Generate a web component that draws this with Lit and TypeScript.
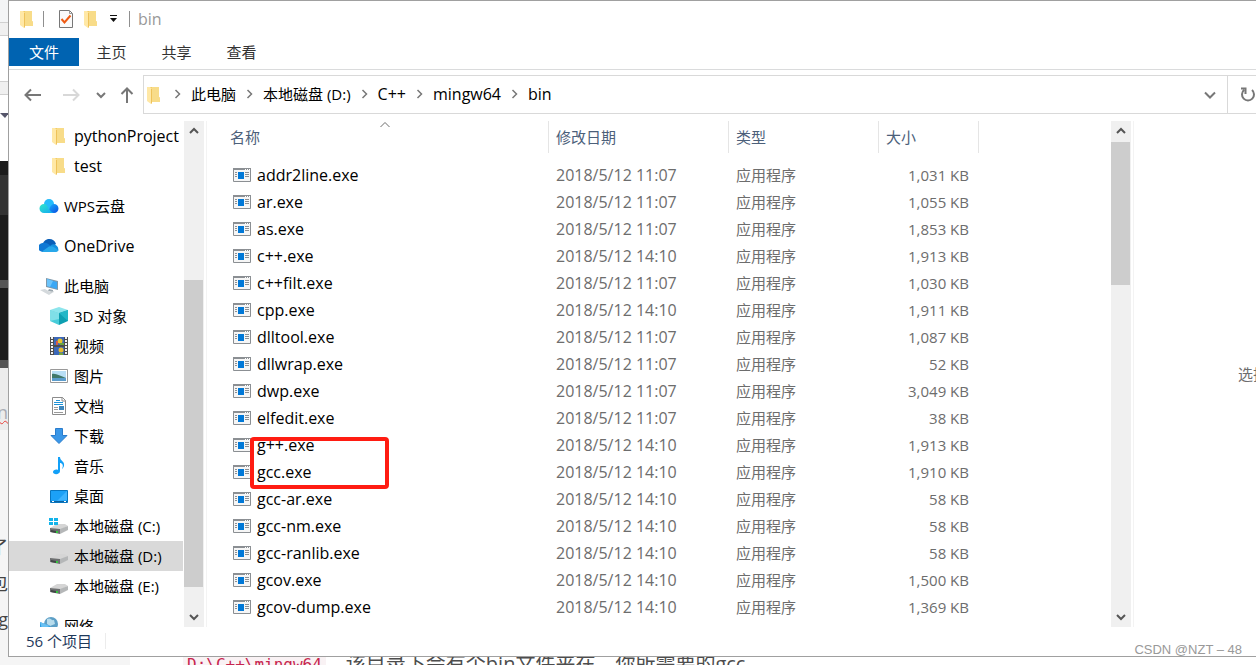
import { LitElement, html, css, svg } from "lit";
import { customElement, property } from "lit/decorators.js";
import { classMap } from "lit/directives/class-map.js";
import { styleMap } from "lit/directives/style-map.js";

const base = css`
  * { box-sizing: border-box; }
  button {
    margin: 0; padding: 0; border: 0; background: none;
    font: inherit; color: inherit; cursor: default;
    display: flex; align-items: center; justify-content: center;
  }
  a { color: inherit; text-decoration: none; }
  svg { display: block; flex: none; }
  .latin { font-size: 16px; }
`;

// Latin letters run smaller than ideographs at one size, so Latin-only labels are set a step larger.
const isLatin = (text: string) => /^[\x20-\x7e]+$/.test(text);

const folder = html`<svg width="20" height="20" viewBox="0 0 20 20">
  <path d="M6 2h9v10l1 1v4H6z" fill="#f3cd68"/>
  <path d="M8 2h7v10l1 1v4H8z" fill="#f8dc89"/>
  <path d="M3 2h3l2 2v14l-1 1-4-3z" fill="#ffe8a6"/>
  <path d="M7 4l1 0v14l-1 1z" fill="#eec25a"/></svg>`;

const drive = svg`
  <path d="M1 12l7-4h8l3 2-8 4z" fill="#d5d5d5"/>
  <path d="M1 12l10 1v5L1 16z" fill="#6d6f70"/>
  <path d="M11 13l8-3v4l-8 4z" fill="#b5b7b8"/>
  <path d="M2 14l5 1v2l-5-1z" fill="#424546"/>
  <path d="M7 15h2v2H7z" fill="#35c63c"/>`;

const icons: Record<string, unknown> = {
  folder,
  wps: html`<svg width="20" height="20" viewBox="0 0 20 20">
    <defs><linearGradient id="w1" x1="0" y1="0" x2="1" y2="1"><stop offset="0" stop-color="#1bb3ff"/><stop offset="1" stop-color="#0b4fe0"/></linearGradient>
    <linearGradient id="w2" x1="0" y1="0" x2="1" y2="1"><stop offset="0" stop-color="#2fe6c8"/><stop offset="1" stop-color="#12a6f5"/></linearGradient></defs>
    <circle cx="10" cy="8" r="5" fill="#25bbfb"/><path d="M8 17c2-2 3-9 7-9a4.500 4.500 0 0 1 0 9z" fill="url(#w1)"/>
    <path d="M5 17a4.500 4.500 0 0 1 0-9c4 0 5 8 10 9z" fill="url(#w2)"/></svg>`,
  onedrive: html`<svg width="20" height="20" viewBox="0 0 20 20">
    <path d="M4 8c1-6 11-7 13 0l-6 4z" fill="#0a5fb8"/><path d="M4 16a4.500 4.500 0 0 1-.5-9c4-1 6 1 8 3l-7 6z" fill="#0f78d4"/>
    <path d="M13 8.500a5 5 0 0 1 6 6.500l-8-5z" fill="#1490df"/><path d="M3 15.500l7-5c3-1 6 1 9.500 4-1 1.500-2 1.500-3 1.500H4z" fill="#28a8ea"/></svg>`,
  pc: html`<svg width="20" height="20" viewBox="0 0 20 20">
    <path d="M7 2l12 3v9L7 11z" fill="#7f98aa"/><path d="M8 3l10 3v7L8 10z" fill="#3ba8f5"/><path d="M8 3l6 2-3 6-3-1z" fill="#6cc4fb"/>
    <path d="M10 13l4 1v2l-5-1z" fill="#9aa6ad"/><path d="M1 14l5-1 7 4-3 2z" fill="#d4d9dc"/><path d="M11 16l3-1 1 1-3 1z" fill="#c3cacd"/></svg>`,
  cube: html`<svg width="20" height="20" viewBox="0 0 20 20">
    <path d="M10 1l9 3-9 3-9-3z" fill="#8de5ec"/><path d="M1 4l9 3v12l-9-4z" fill="#47ccd9"/><path d="M19 4l-9 3v12l9-4z" fill="#0d9fb1"/>
    <path d="M1 4l9 3v6L1 15z" fill="#7fdfe7"/><path d="M10 7l9-3v11z" fill="#22b7c7"/></svg>`,
  video: html`<svg width="20" height="20" viewBox="0 0 20 20">
    <path d="M1 1h18v18H1z" fill="#4d4d4d"/><path d="M5 1h10v8H5zM5 11h10v8H5z" fill="#3c68b8"/>
    <path d="M3 1v18M17 1v18" stroke="#f2f2f2" stroke-width="2" stroke-dasharray="2 1"/>
    <circle cx="11" cy="5" r="2.500" fill="#e8c22c"/><path d="M7 5h2v4H7z" fill="#d45b4c"/><path d="M11 7h4v2h-4z" fill="#69a440"/>
    <circle cx="12" cy="14" r="2.500" fill="#e6b92e"/><path d="M10 17h4v2h-4z" fill="#75a43e"/></svg>`,
  picture: html`<svg width="20" height="20" viewBox="0 0 20 20">
    <path d="M1.500 3.500h17v13h-17z" fill="#fff" stroke="#999"/><path d="M3 5h14v10H3z" fill="#b8def5"/>
    <path d="M3 8c4-1 8 2 14 4v1H3z" fill="#41786a"/><path d="M3 12h14v3H3z" fill="#5b9ccc"/></svg>`,
  doc: html`<svg width="20" height="20" viewBox="0 0 20 20">
    <path d="M3.500 1.500h10l3 3v14h-13z" fill="#fff" stroke="#8c8c8c"/><path d="M13 1v4h4" fill="none" stroke="#8c8c8c"/>
    <path d="M7 4.500h4M5 6.500h9M5 8.500h9" stroke="#1f93d8"/><path d="M5 11.500h4M5 13.500h4M5 16.500h9" stroke="#9a9a9a"/><path d="M10 10h5v4h-5z" fill="#3c86bd"/></svg>`,
  download: html`<svg width="20" height="20" viewBox="0 0 20 20"><path d="M6.500 2.500h7v7h4.500l-8 8-8-8h4.500z" fill="#3a97e8" stroke="#2a7ccc"/></svg>`,
  music: html`<svg width="20" height="20" viewBox="0 0 20 20">
    <path d="M9 1h2c0 4 5 4 4 9-1 2-1 2-2 3 2-4 0-6-2-6v8c0 4-7 4-7 1 0-2 3-3 5-2z" fill="#12a0f8"/></svg>`,
  desktop: html`<svg width="20" height="20" viewBox="0 0 20 20">
    <path d="M1.500 4.500h17v12h-17z" fill="#1ca1f7" stroke="#0876c0"/><path d="M18 5v9L8 15z" fill="#3eb4ff"/>
    <path d="M2 15.500h16" stroke="#0c609c"/><path d="M3 15.500h2M15 15.500h2" stroke="#fff"/></svg>`,
  system: html`<svg width="20" height="20" viewBox="0 0 20 20">${drive}<path d="M0 2h4v3H0zM5 2h4v3H5zM0 6h4v3H0zM5 6h4v3H5z" fill="#12b3ea"/></svg>`,
  drive: html`<svg width="20" height="20" viewBox="0 0 20 20">${drive}</svg>`,
  network: html`<svg width="20" height="20" viewBox="0 0 20 20">
    <circle cx="12" cy="8" r="7" fill="#5d9fc6"/><path d="M8 3c4-2 4 2 7 1l1 4-5 2-3-2z" fill="#b8dcec"/>
    <path d="M1 6l10 4v9L1 15z" fill="#2b9ce2"/><path d="M1 6l10 4-8 3z" fill="#69c1f3"/></svg>`,
};

const chevron = (d: string) => html`<svg width="12" height="12" viewBox="0 0 12 12"><path d=${d} fill="none" stroke="currentColor" stroke-width="2"/></svg>`;
const UP = "M2 8l4-4 4 4";
const DOWN = "M2 4l4 4 4-4";

@customElement("scroll-bar")
class ScrollBar extends LitElement {
  @property({ type: Number }) before = 0;
  @property({ type: Number }) thumb = 1;
  @property({ type: Number }) after = 0;
  static styles = [base, css`
    :host { display: flex; flex-direction: column; flex: none; width: 23px; padding-right: 2px; border-right: 1px solid #f3f3f3; }
    .track { flex: 1; display: flex; flex-direction: column; width: 20px; background: #f0f0f0; color: #555; }
    button { height: 20px; width: 20px; flex: none; }
    .rail { flex: 1; display: flex; flex-direction: column; }
    .thumb { width: 19px; background: #cdcdcd; }
  `];
  render() {
    return html`<div class="track">
      <button aria-label="向上滚动">${chevron(UP)}</button>
      <div class="rail">
        <div style=${styleMap({ flexGrow: String(this.before) })}></div>
        <div class="thumb" style=${styleMap({ flexGrow: String(this.thumb) })}></div>
        <div style=${styleMap({ flexGrow: String(this.after) })}></div>
      </div>
      <button aria-label="向下滚动">${chevron(DOWN)}</button>
    </div>`;
  }
}

interface Node { icon: string; label: string; nested?: boolean; selected?: boolean; }
const groups: Node[][] = [
  [{ icon: "folder", label: "pythonProject", nested: true }, { icon: "folder", label: "test", nested: true }],
  [{ icon: "wps", label: "WPS云盘" }],
  [{ icon: "onedrive", label: "OneDrive" }],
  [
    { icon: "pc", label: "此电脑" },
    { icon: "cube", label: "3D 对象", nested: true },
    { icon: "video", label: "视频", nested: true },
    { icon: "picture", label: "图片", nested: true },
    { icon: "doc", label: "文档", nested: true },
    { icon: "download", label: "下载", nested: true },
    { icon: "music", label: "音乐", nested: true },
    { icon: "desktop", label: "桌面", nested: true },
    { icon: "system", label: "本地磁盘 (C:)", nested: true },
    { icon: "drive", label: "本地磁盘 (D:)", nested: true, selected: true },
    { icon: "drive", label: "本地磁盘 (E:)", nested: true },
  ],
  [{ icon: "network", label: "网络" }],
];

@customElement("nav-tree")
class NavTree extends LitElement {
  static styles = [base, css`
    :host { display: block; flex: none; width: 175px; overflow: hidden; }
    .tree { display: flex; flex-direction: column; gap: 10px; width: 174px; }
    .item { display: flex; align-items: center; gap: 5px; height: 30px; padding-left: 30px; white-space: nowrap; color: #000; }
    .nested { padding-left: 40px; }
    .selected { background: #d9d9d9; }
  `];
  render() {
    return html`<nav class="tree">${groups.map((g) => html`<div>${g.map((n) => html`
      <a href="#" class=${classMap({ item: true, nested: !!n.nested, selected: !!n.selected })}>${icons[n.icon]}<span class=${classMap({ latin: isLatin(n.label) })}>${n.label}</span></a>`)}</div>`)}</nav>`;
  }
}

const files: [string, string, string][] = [
  ["addr2line.exe", "11:07", "1,031"], ["ar.exe", "11:07", "1,055"], ["as.exe", "11:07", "1,853"],
  ["c++.exe", "14:10", "1,913"], ["c++filt.exe", "11:07", "1,030"], ["cpp.exe", "14:10", "1,911"],
  ["dlltool.exe", "11:07", "1,087"], ["dllwrap.exe", "11:07", "52"], ["dwp.exe", "11:07", "3,049"],
  ["elfedit.exe", "11:07", "38"], ["g++.exe", "14:10", "1,913"], ["gcc.exe", "14:10", "1,910"],
  ["gcc-ar.exe", "14:10", "58"], ["gcc-nm.exe", "14:10", "58"], ["gcc-ranlib.exe", "14:10", "58"],
  ["gcov.exe", "14:10", "1,500"], ["gcov-dump.exe", "14:10", "1,369"], ["gcov-tool.exe", "14:10", "1,401"],
];

const exeIcon = html`<svg width="18" height="14" viewBox="0 0 18 14">
  <path d="M.5 .5h17v13H.5z" fill="#f6f6f6" stroke="#8b8f93"/><path d="M0 0h18v2H0z" fill="#8b8f93"/>
  <path d="M12 1h1v1h-1zM14 1h1v1h-1zM16 1h1v1h-1z" fill="#fff"/><path d="M5 4h6v7H5z" fill="#0078d7"/>
  <path d="M2 4.500h2M2 6.500h2M2 8.500h2M12 4.500h4M12 6.500h4M12 8.500h4" stroke="#8b8f93"/></svg>`;

@customElement("file-list")
class FileList extends LitElement {
  static styles = [base, css`
    :host { display: block; flex: 1; min-width: 0; overflow: hidden; padding-left: 15px; }
    table { border-collapse: separate; border-spacing: 0; table-layout: fixed; width: 757px; }
    .c-name { width: 327px; } .c-date { width: 180px; } .c-type { width: 150px; } .c-size { width: 100px; }
    th { position: relative; height: 32px; padding: 0 0 1px 8px; border-right: 1px solid #e5e5e5; font-weight: 400; text-align: left; color: #4c607a; }
    th + th { padding-left: 7px; }
    .sort { position: absolute; top: 0; left: 50%; margin-left: -6px; }
    tbody::before { content: ""; display: block; height: 8px; }
    td { height: 27px; padding: 0 0 0 7px; color: #6d6d6d; white-space: nowrap; }
    .name { position: relative; padding-left: 11px; color: #000; }
    .file { display: flex; align-items: center; gap: 6px; }
    .size { padding-right: 10px; text-align: right; }
    .mark { position: absolute; top: 6px; left: 28px; width: 139px; height: 52px; border: 4px solid #ff1c12; border-radius: 4px; z-index: 1; }
  `];
  render() {
    return html`<table>
      <colgroup><col class="c-name"><col class="c-date"><col class="c-type"><col class="c-size"></colgroup>
      <thead><tr>
        <th><button>名称</button><svg class="sort" width="12" height="8" viewBox="0 0 12 8"><path d="M1.500 6L6 1.500 10.500 6" fill="none" stroke="#6d6d6d"/></svg></th>
        <th><button>修改日期</button></th><th><button>类型</button></th><th><button>大小</button></th>
      </tr></thead>
      <tbody>${files.map(([name, time, size]) => html`<tr>
        <td class="name latin"><div class="file">${exeIcon}<span>${name}</span></div>${name === "g++.exe" ? html`<div class="mark"></div>` : ""}</td>
        <td class="latin">2018/5/12 ${time}</td><td>应用程序</td><td class="size">${size} KB</td></tr>`)}</tbody>
    </table>`;
  }
}

@customElement("page-edge")
class PageEdge extends LitElement {
  static styles = [base, css`
    :host { display: flex; flex-direction: column; overflow: hidden; background: #f5f5f5; }
    div { flex: none; overflow: hidden; white-space: nowrap; }
    .bar { height: 22px; background: #f4f5f6; }
    .tool { height: 14px; background: #f0f0f0; border: solid #d0d0d0; border-width: 1px 0; }
    .blank { height: 45px; background: #fff; }
    .menu { height: 66px; background: #fff; }
    .menu svg { margin-top: 18px; }
    .dark { height: 14px; background: #1c1c1c; }
    .panel { height: 40px; background: #333; }
    .code { height: 65px; background: #1c1c1c; }
    .log { height: 72px; background: #1c1c1c; }
    .tab { height: 8px; background: #555; }
    .note { height: 62px; background: #ececec; padding-top: 32px; color: #a9adb5; font-size: 18px; line-height: 24px; direction: rtl; }
    .text { height: 36px; line-height: 36px; font-size: 18px; color: #444; direction: rtl; }
    .wavy { text-decoration: underline wavy #e8403a 1px; }
    .gap { height: 99px; }
  `];
  render() {
    return html`<div class="bar"></div><div class="tool"></div><div class="blank"></div><div class="tool"></div>
      <div class="menu"><svg width="9" height="6" viewBox="0 0 9 6"><path d="M0 0h9L5 5z" fill="#55556a"/></svg></div>
      <div class="dark"></div><div class="panel"></div><div class="code"></div><div class="tab"></div>
      <div class="log"></div><div class="tab"></div><div class="note wavy">on</div>
      <div class="gap"></div><div class="text">了</div><div class="text">包</div><div class="text wavy">g</div>`;
  }
}

@customElement("app-root")
class AppRoot extends LitElement {
  static styles = [base, css`
    :host {
      position: relative; display: grid; grid-template-columns: 8px minmax(0, 1fr); grid-template-rows: minmax(0, 1fr) 8px;
      height: 100vh; overflow: hidden; background: #f5f5f5;
      font: 15px/20px "Open Sans", "Noto Sans CJK SC", sans-serif; color: #000;
    }
    .window { display: flex; flex-direction: column; min-height: 0; background: #fff; border: solid #a0a0a0; border-width: 1px 0 1px 1px; }
    .title { display: flex; align-items: center; height: 37px; flex: none; padding: 0 0 1px 8px; color: #999; }
    .sep { width: 1px; height: 16px; background: #8f8f8f; }
    .title .sep:nth-of-type(1) { margin: 0 12px 0 6px; }
    .title .check { margin: 0 6px 0 1px; }
    .title .more { margin: 0 11px 0 8px; }
    .name { margin-left: 8px; }
    .tabs { display: flex; height: 32px; flex: none; border-bottom: 1px solid #dadbdc; color: #333; }
    .tabs button { width: 65px; height: 28px; }
    .tabs .file { width: 70px; background: #0063b1; color: #fff; }
    .bar { display: flex; align-items: flex-start; height: 51px; flex: none; padding-top: 5px; }
    .arrows { display: flex; align-items: center; height: 39px; width: 134px; flex: none; padding-left: 14px; color: #777; }
    .arrows .next { margin-left: 18px; color: #d8d8d8; }
    .arrows .recent { margin: 0 13px 0 14px; }
    .address { display: flex; align-items: center; flex: 1; min-width: 0; height: 39px; border: 1px solid #d9d9d9; border-right: 0; color: #777; }
    .crumb { display: flex; align-items: center; white-space: nowrap; padding-bottom: 2px; }
    .crumb a { color: #000; }
    .crumb svg { width: 27px; }
    .address .drop { margin-left: auto; width: 36px; height: 37px; border-right: 1px solid #d9d9d9; }
    .refresh { width: 28px; height: 37px; overflow: hidden; justify-content: flex-start; padding-left: 11px; }
    .main { display: flex; flex: 1; min-height: 0; }
    .preview { display: flex; align-items: center; flex: none; width: 122px; padding-left: 104px; overflow: hidden; white-space: nowrap; color: #6d6d6d; }
    .status { display: flex; align-items: center; height: 29px; flex: none; padding: 0 0 2px 17px; color: #1e395b; }
    .status span { padding-right: 13px; border-right: 1px solid #ececec; line-height: 16px; }
    .edge { grid-row: 1 / 3; }
    .below { display: flex; align-items: flex-start; gap: 20px; padding-left: 175px; overflow: hidden; white-space: nowrap; color: #4d4d4d; font-size: 20px; line-height: 14px;
      background: linear-gradient(90deg, #f5f5f5 122px, #fff 122px); }
    .below code { font: 16px/16px "DejaVu Sans Mono", monospace; color: #c7254e; background: #f9f2f4; padding: 0 4px; }
    .credit { position: absolute; right: 14px; bottom: 6px; font: 13px/18px "Liberation Sans", sans-serif; color: #999; }
  `];
  render() {
    const sep = html`<svg height="12" viewBox="0 0 12 12"><path d="M4 2l4 4-4 4" fill="none" stroke="currentColor" stroke-width="1.500"/></svg>`;
    const crumbs = ["此电脑", "本地磁盘 (D:)", "C++", "mingw64", "bin"];
    return html`
      <page-edge class="edge"></page-edge>
      <div class="window">
        <div class="title">
          ${folder}<div class="sep"></div>
          <button class="check" aria-label="属性"><svg width="18" height="20" viewBox="0 0 18 20"><path d="M2.500 1.500h10l3 3v14h-13z" fill="#fafafa" stroke="#777"/><path d="M12.500 1.500v3h3" fill="none" stroke="#999"/><path d="M4.500 10l3 3.500 6-7" fill="none" stroke="#ee5a13" stroke-width="2"/></svg></button>
          ${folder}
          <button class="more" aria-label="自定义快速访问工具栏"><svg width="9" height="8" viewBox="0 0 9 8"><path d="M1 0h7v1H1zM1 3h7L4.500 7z" fill="#111"/></svg></button>
          <div class="sep"></div><span class="name latin">bin</span>
        </div>
        <div class="tabs"><button class="file">文件</button><button>主页</button><button>共享</button><button>查看</button></div>
        <div class="bar">
          <div class="arrows">
            <button aria-label="后退"><svg width="20" height="16" viewBox="0 0 20 16"><path d="M18 8H3M8 2.500L2.500 8 8 13.500" fill="none" stroke="currentColor" stroke-width="2"/></svg></button>
            <button class="next" aria-label="前进"><svg width="20" height="16" viewBox="0 0 20 16"><path d="M2 8h15M12 2.500L17.500 8 12 13.500" fill="none" stroke="currentColor" stroke-width="2"/></svg></button>
            <button class="recent" aria-label="最近浏览的位置">${chevron(DOWN)}</button>
            <button aria-label="向上"><svg width="14" height="18" viewBox="0 0 14 18"><path d="M7 17V3M1.500 8L7 2.500 12.500 8" fill="none" stroke="currentColor" stroke-width="2"/></svg></button>
          </div>
          <div class="address">
            ${folder}
            ${crumbs.map((c) => html`<span class="crumb">${sep}<a href="#" class=${classMap({ latin: isLatin(c) })}>${c}</a></span>`)}
            <button class="drop" aria-label="以前的位置"><svg width="14" height="12" viewBox="0 0 14 12"><path d="M2 3.500l5 5 5-5" fill="none" stroke="currentColor" stroke-width="2"/></svg></button>
            <button class="refresh" aria-label="刷新"><svg width="18" height="18" viewBox="0 0 18 18"><path d="M5 4a6 6 0 1 0 8 0M2 2.500h4.500V8" fill="none" stroke="currentColor" stroke-width="2"/></svg></button>
          </div>
        </div>
        <div class="main">
          <nav-tree></nav-tree>
          <scroll-bar .before=${139} .thumb=${307} .after=${20}></scroll-bar>
          <file-list></file-list>
          <scroll-bar .before=${1} .thumb=${143} .after=${322}></scroll-bar>
          <div class="preview">选择要预览的文件。</div>
        </div>
        <div class="status"><span>56 个项目</span></div>
      </div>
      <div class="below"><code>D:\\C++\\mingw64</code><span>该目录下会有个bin文件夹在，你所需要的gcc</span></div>
      <div class="credit">CSDN @NZT – 48</div>`;
  }
}
